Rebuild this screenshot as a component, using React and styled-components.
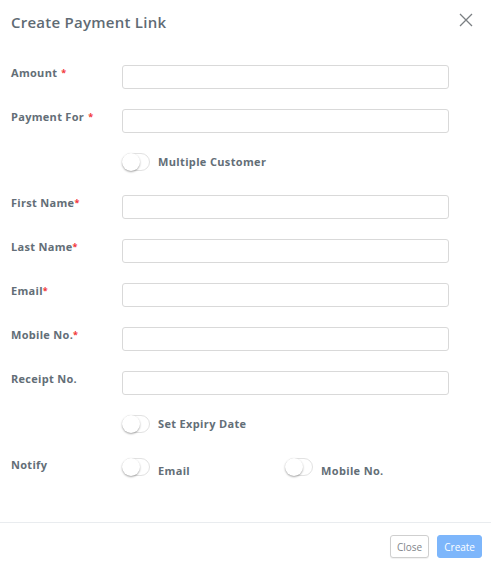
import React from 'react'
import styled, { createGlobalStyle } from 'styled-components'

const GlobalStyle = createGlobalStyle`
  html, body {
    margin: 0;
    padding: 0;
    background: #ffffff;
  }
  body {
    font-family: 'Open Sans', 'Liberation Sans', sans-serif;
  }
`

const Modal = styled.div`
  width: 491px;
  height: 567px;
  background: #fff;
  display: flex;
  flex-direction: column;
  box-sizing: border-box;
`

const Header = styled.div`
  height: 44px;
  display: flex;
  align-items: center;
  justify-content: space-between;
  padding: 0 18px 0 11px;
  box-sizing: border-box;
`

const Title = styled.h2`
  margin: 0;
  font-size: 15px;
  font-weight: 600;
  color: #5f6b74;
  letter-spacing: 0.25px;
`

const CloseIcon = styled.button`
  background: none;
  border: none;
  padding: 0;
  width: 14px;
  height: 14px;
  display: flex;
  margin-top: -4px;
  cursor: pointer;
`

const Body = styled.div`
  padding: 21px 11px 0 11px;
  display: flex;
  flex-direction: column;
  gap: 20px;
  flex: 1;
`

const Row = styled.div`
  display: grid;
  grid-template-columns: 111px 327px;
  align-items: start;
  min-height: ${p => (p.toggle ? '22px' : '24px')};
`

const Label = styled.label`
  font-size: 11px;
  line-height: 16px;
  font-weight: 700;
  color: #636e77;
  letter-spacing: 0.3px;
`

const Star = styled.span`
  color: #f2383a;
  font-size: 9px;
  vertical-align: 1px;
  margin-left: ${p => (p.tight ? '0' : '4px')};
`

const Input = styled.input`
  box-sizing: border-box;
  width: 327px;
  height: 24px;
  border: 1px solid #d9d9d9;
  border-radius: 3px;
  outline: none;
  padding: 0 8px;
`

const Options = styled.div`
  display: flex;
`

const Option = styled.div`
  display: flex;
  align-items: ${p => (p.low ? 'flex-start' : 'center')};
  width: ${p => (p.width ? p.width + 'px' : 'auto')};
  gap: 8px;
`

const Switch = styled.span`
  position: relative;
  display: inline-block;
  width: 28px;
  height: 18px;
  border: 1px solid #e2e2e2;
  border-radius: 10px;
  box-sizing: border-box;
  background: #fff;
  flex-shrink: 0;
  margin-top: ${p => (p.low ? '1px' : '0')};

  &::after {
    content: '';
    position: absolute;
    left: -1px;
    top: -1px;
    width: 18px;
    height: 18px;
    border-radius: 50%;
    background: #fff;
    box-shadow: 0 1px 2px rgba(0, 0, 0, 0.35);
  }
`

const OptionText = styled.span`
  font-size: 11px;
  line-height: 16px;
  font-weight: 700;
  color: #636e77;
  letter-spacing: 0.35px;
  margin-top: ${p => (p.low ? '6px' : '0')};
`

const Footer = styled.div`
  border-top: 1px solid #e9ecef;
  padding: 12px 9px 9px 0;
  display: flex;
  justify-content: flex-end;
  gap: 8px;
`

const Button = styled.button`
  height: 23px;
  padding: 0 6px;
  font-family: 'Open Sans', 'Liberation Sans', sans-serif;
  font-size: 10px;
  border-radius: 3px;
  border: 1px solid ${p => (p.primary ? '#7db6fb' : '#cfcfcf')};
  background: ${p => (p.primary ? '#7db6fb' : '#fff')};
  color: ${p => (p.primary ? '#fff' : '#7f858a')};
  box-shadow: ${p => (p.primary ? 'none' : '0 1px 1px rgba(0,0,0,0.06)')};
`

const fields = [{ label: 'Amount' }, { label: 'Payment For' }]

const personal = [
  { label: 'First Name', required: true },
  { label: 'Last Name', required: true },
  { label: 'Email', required: true },
  { label: 'Mobile No.', required: true },
  { label: 'Receipt No.', required: false },
]

export default function App() {
  return (
    <Modal>
      <GlobalStyle />
      <Header>
        <Title>Create Payment Link</Title>
        <CloseIcon aria-label="close">
          <svg width="14" height="14" viewBox="0 0 14 14">
            <path d="M1 1L13 13M13 1L1 13" stroke="#7b7f83" strokeWidth="1.3" />
          </svg>
        </CloseIcon>
      </Header>
      <Body>
        {fields.map(f => (
          <Row key={f.label}>
            <Label>
              {f.label}
              <Star>*</Star>
            </Label>
            <Input />
          </Row>
        ))}
        <Row toggle>
          <span />
          <Option>
            <Switch />
            <OptionText>Multiple Customer</OptionText>
          </Option>
        </Row>
        {personal.map(f => (
          <Row key={f.label}>
            <Label>
              {f.label}
              {f.required && <Star tight>*</Star>}
            </Label>
            <Input />
          </Row>
        ))}
        <Row toggle>
          <span />
          <Option>
            <Switch />
            <OptionText>Set Expiry Date</OptionText>
          </Option>
        </Row>
        <Row toggle>
          <Label>Notify</Label>
          <Options>
            <Option low width={163}>
              <Switch low />
              <OptionText low>Email</OptionText>
            </Option>
            <Option low>
              <Switch low />
              <OptionText low>Mobile No.</OptionText>
            </Option>
          </Options>
        </Row>
      </Body>
      <Footer>
        <Button>Close</Button>
        <Button primary>Create</Button>
      </Footer>
    </Modal>
  )
}
